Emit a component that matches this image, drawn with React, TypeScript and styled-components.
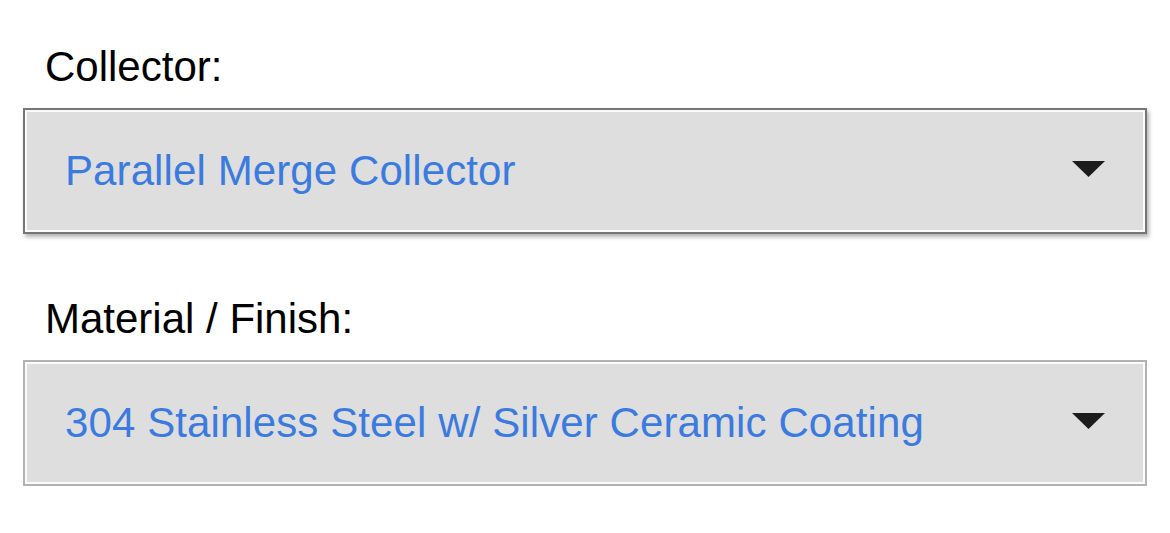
import styled, { createGlobalStyle } from "styled-components";

const GlobalStyle = createGlobalStyle`
  html, body {
    margin: 0;
    padding: 0;
    background: #ffffff;
  }
  body {
    font-family: "Liberation Sans", Arial, sans-serif;
  }
`;

const Page = styled.div`
  display: flex;
  flex-direction: column;
  padding: 43px 23px 0 23px;
`;

const Field = styled.div<{ $gap?: number }>`
  display: flex;
  flex-direction: column;
  gap: 17px;
  margin-bottom: ${({ $gap }) => $gap || 0}px;
`;

const Label = styled.div`
  font-size: 42px;
  line-height: 48px;
  color: #000;
  padding-left: 22px;
`;

const Select = styled.div<{ $focused?: boolean }>`
  box-sizing: border-box;
  display: flex;
  align-items: center;
  justify-content: space-between;
  height: 126px;
  padding: 0 40px 0 40px;
  background: #dedede;
  border: 2px solid ${({ $focused }) => ($focused ? "#767676" : "#b2b2b2")};
  box-shadow: inset 0 0 0 2px #fbfbfb
    ${({ $focused }) => ($focused ? ", 2px 3px 4px rgba(0, 0, 0, 0.3)" : "")};
`;

const Value = styled.span`
  font-size: 42px;
  line-height: 48px;
  letter-spacing: 0.1px;
  color: #3b7be0;
  white-space: nowrap;
`;

const Caret = styled.svg`
  width: 33px;
  height: 16px;
  flex-shrink: 0;
  margin-top: -4px;
`;

const DownArrow = () => (
  <Caret viewBox="0 0 33 16">
    <path d="M0 0 H33 L16.5 16 Z" fill="#1c1c1c" />
  </Caret>
);

export default function App() {
  return (
    <>
      <GlobalStyle />
      <Page>
        <Field $gap={61}>
          <Label>Collector:</Label>
          <Select $focused>
            <Value>Parallel Merge Collector</Value>
            <DownArrow />
          </Select>
        </Field>
        <Field>
          <Label>Material / Finish:</Label>
          <Select>
            <Value>304 Stainless Steel w/ Silver Ceramic Coating</Value>
            <DownArrow />
          </Select>
        </Field>
      </Page>
    </>
  );
}
